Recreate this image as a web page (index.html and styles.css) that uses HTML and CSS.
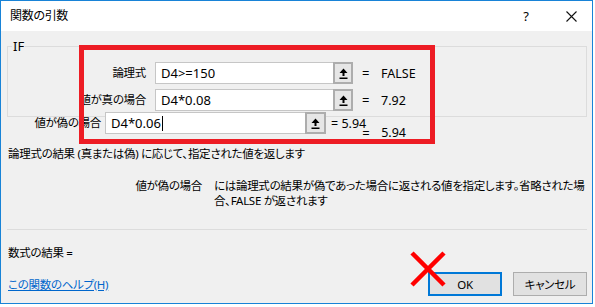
FILE: index.html
```html
<!DOCTYPE html>
<html lang="ja">
<head>
    <meta charset="UTF-8">
    <title>関数の引数</title>
    <link rel="stylesheet" href="styles.css">
</head>
<body>
    <div class="dialog">
        <div class="titlebar">
            <span class="title">関数の引数</span>
            <span class="help-btn">?</span>
            <span class="close-btn">
                <svg width="11" height="11" viewBox="0 0 11 11"><path d="M0.5 0.5 L10.5 10.5 M10.5 0.5 L0.5 10.5" stroke="#111" stroke-width="1.1" fill="none"/></svg>
            </span>
        </div>

        <div class="content">
            <div class="group">
                <div class="group-title">IF</div>
                <div class="arg-row">
                    <span class="arg-label">論理式</span>
                    <span class="arg-input">D4&gt;=150</span>
                    <span class="ref-btn"><svg width="9" height="11" viewBox="0 0 9 11"><path d="M4.5 0.5 L0.5 5 L3.5 5 L3.5 8 L5.5 8 L5.5 5 L8.5 5 Z M0.5 9.5 H8.5 V11 H0.5 Z" fill="#000"/></svg></span>
                    <span class="arg-eq">=</span>
                    <span class="arg-value">FALSE</span>
                </div>
                <div class="arg-row">
                    <span class="arg-label">値が真の場合</span>
                    <span class="arg-input">D4*0.08</span>
                    <span class="ref-btn"><svg width="9" height="11" viewBox="0 0 9 11"><path d="M4.5 0.5 L0.5 5 L3.5 5 L3.5 8 L5.5 8 L5.5 5 L8.5 5 Z M0.5 9.5 H8.5 V11 H0.5 Z" fill="#000"/></svg></span>
                    <span class="arg-eq">=</span>
                    <span class="arg-value">7.92</span>
                </div>
            </div>

            <div class="arg-row loose">
                <span class="arg-label">値が偽の場合</span>
                <span class="arg-input">D4*0.06<span class="caret"></span></span>
                <span class="ref-btn"><svg width="9" height="11" viewBox="0 0 9 11"><path d="M4.5 0.5 L0.5 5 L3.5 5 L3.5 8 L5.5 8 L5.5 5 L8.5 5 Z M0.5 9.5 H8.5 V11 H0.5 Z" fill="#000"/></svg></span>
                <span class="loose-value">= 5.94</span>
                <span class="stray-value"><span class="arg-eq">=</span><span class="arg-value">5.94</span></span>
            </div>

            <p class="summary">論理式の結果 (真または偽) に応じて、指定された値を返します</p>

            <div class="arg-help">
                <span class="arg-help-name">値が偽の場合</span>
                <span class="arg-help-text">には論理式の結果が偽であった場合に返される値を指定します。省略された場合、FALSE が返されます</span>
            </div>

            <div class="separator"></div>

            <p class="formula-result">数式の結果 =</p>

            <div class="footer">
                <a class="help-link" href="#">この関数のヘルプ(H)</a>
                <span class="btn btn-ok">OK</span>
                <span class="btn">キャンセル</span>
            </div>
        </div>

        <div class="mark-box"></div>
        <svg class="mark-x" width="36" height="36" viewBox="0 0 36 36">
            <path d="M2 2 L34 34 M34 2 L2 34" stroke="#ff0000" stroke-width="4.5" fill="none"/>
        </svg>
    </div>
</body>
</html>
```

FILE: styles.css
```css
body {
    margin: 0;
    background: #fff;
    font-family: "Noto Sans", "Noto Sans CJK JP", sans-serif;
    font-size: 11.5px;
    letter-spacing: -0.3px;
    font-feature-settings: "palt";
    color: #000;
}

.dialog {
    position: relative;
    width: 593px;
    height: 304px;
    box-sizing: border-box;
    border: 1px solid #1883d7;
    background: #f0f0f0;
}

.titlebar {
    height: 30px;
    background: #fff;
    display: flex;
    align-items: center;
    padding-left: 9px;
}

.title {
    font-size: 12px;
    line-height: 14px;
}

.help-btn {
    margin-left: auto;
    width: 12px;
    text-align: center;
    font-size: 13px;
}

.close-btn {
    display: flex;
    margin-left: 34px;
    margin-right: 15px;
}

.content {
    padding: 0 5px 0 6px;
}

.group {
    margin-top: 15px;
    border: 1px solid #dcdcdc;
    padding-bottom: 5px;
}

.group-title {
    display: table;
    margin: -8px 0 0 4px;
    padding: 0 1px;
    background: #f0f0f0;
    line-height: 14px;
    font-size: 13px;
    letter-spacing: 0;
}

.arg-row {
    display: flex;
    align-items: center;
    height: 22px;
    margin-top: 5px;
}

.group-title + .arg-row {
    margin-top: 9px;
}

.arg-label {
    width: 138px;
    text-align: right;
    line-height: 14px;
}

.arg-input {
    box-sizing: border-box;
    width: 178px;
    height: 22px;
    margin-left: 9px;
    padding: 0 5px;
    background: #fff;
    border: 1px solid #c6c6c6;
    border-right: none;
    font-size: 13px;
    letter-spacing: 0;
    line-height: 20px;
    display: flex;
    align-items: center;
}

.ref-btn {
    box-sizing: border-box;
    width: 20px;
    height: 22px;
    background: #e6e6e6;
    border: 2px solid #adadad;
    display: flex;
    align-items: center;
    justify-content: center;
}

.arg-eq {
    width: 7px;
    margin-left: 9px;
    text-align: center;
    font-size: 13px;
    letter-spacing: 0;
}

.arg-value {
    margin-left: 12px;
    font-size: 12.5px;
    letter-spacing: 0;
}

.loose {
    margin-top: -5px;
    align-items: flex-start;
    height: 27px;
}

.loose .arg-label {
    width: 94px;
    margin-top: 4px;
}

.loose .arg-input {
    width: 200px;
    margin-left: 4px;
}

.loose .ref-btn {
    width: 21px;
}

.caret {
    display: inline-block;
    width: 1px;
    height: 15px;
    margin-left: 1px;
    background: #000;
}

.loose-value {
    margin-left: 5px;
    margin-top: 3px;
    font-size: 12.5px;
    letter-spacing: 0;
}

.stray-value {
    display: flex;
    margin-left: -13px;
    margin-top: 12px;
}

.summary {
    margin: 7px 0 0 1px;
    line-height: 15px;
}

.arg-help {
    display: flex;
    margin-top: 17px;
    line-height: 15px;
}

.arg-help-name {
    width: 195px;
    text-align: right;
    flex-shrink: 0;
}

.arg-help-text {
    margin-left: 12px;
    width: 373px;
}

.separator {
    margin-top: 21px;
    border-top: 1px solid #dcdcdc;
}

.formula-result {
    margin: 15px 0 0 1px;
    line-height: 15px;
}

.footer {
    display: flex;
    align-items: center;
    margin-top: 12px;
    padding-left: 1px;
}

.help-link {
    color: #0066cc;
    text-decoration: underline;
    margin-right: auto;
}

.btn {
    box-sizing: border-box;
    width: 74px;
    height: 24px;
    margin-left: 11px;
    background: #e1e1e1;
    border: 1px solid #adadad;
    display: flex;
    align-items: center;
    justify-content: center;
}

.btn-ok {
    border: 2px solid #0078d7;
}

.mark-box {
    position: absolute;
    left: 78px;
    top: 44px;
    width: 356px;
    height: 99px;
    box-sizing: border-box;
    border: 5px solid #ed1c24;
}

.mark-x {
    position: absolute;
    left: 409px;
    top: 250px;
}
```
